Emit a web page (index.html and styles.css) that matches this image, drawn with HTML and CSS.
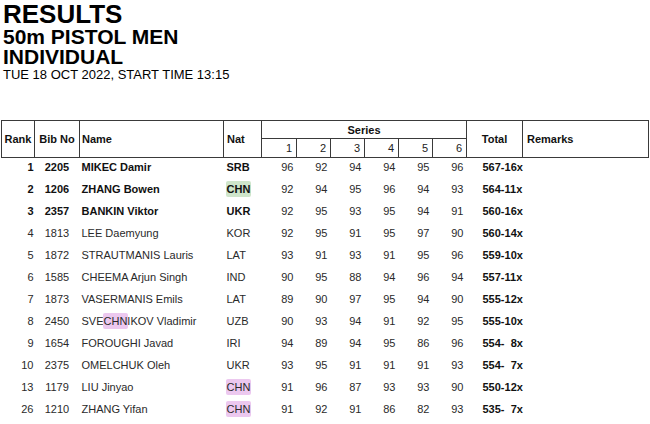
FILE: index.html
```html
<!DOCTYPE html>
<html>
<head>
<meta charset="utf-8">
<link rel="stylesheet" href="styles.css">
</head>
<body>
<header class="titles">
  <div class="t-main">RESULTS</div>
  <div class="t-event">50m PISTOL MEN</div>
  <div class="t-event">INDIVIDUAL</div>
  <div class="t-date">TUE 18 OCT 2022, START TIME 13:15</div>
</header>
<table class="results">
  <colgroup>
    <col class="c-rank"><col class="c-bib"><col class="c-name"><col class="c-nat">
    <col class="c-s1"><col class="c-s"><col class="c-s"><col class="c-s"><col class="c-s"><col class="c-s">
    <col class="c-total"><col class="c-rem">
  </colgroup>
  <thead>
    <tr class="h1">
      <th rowspan="2" class="th-c">Rank</th>
      <th rowspan="2" class="th-c">Bib No</th>
      <th rowspan="2" class="th-l">Name</th>
      <th rowspan="2" class="th-nat">Nat</th>
      <th colspan="6" class="th-c">Series</th>
      <th rowspan="2" class="th-c">Total</th>
      <th rowspan="2" class="th-rem">Remarks</th>
    </tr>
    <tr class="h2">
      <th class="th-n">1</th><th class="th-n">2</th><th class="th-n">3</th><th class="th-n">4</th><th class="th-n">5</th><th class="th-n">6</th>
    </tr>
  </thead>
  <tbody>
    <tr class="medal">
      <td class="rank">1</td><td class="bib">2205</td><td class="name">MIKEC Damir</td><td class="nat">SRB</td>
      <td class="s">96</td><td class="s">92</td><td class="s">94</td><td class="s">94</td><td class="s">95</td><td class="s">96</td>
      <td class="total">567-16x</td><td></td>
    </tr>
    <tr class="medal">
      <td class="rank">2</td><td class="bib">1206</td><td class="name">ZHANG Bowen</td><td class="nat"><span class="hl-green">CHN</span></td>
      <td class="s">92</td><td class="s">94</td><td class="s">95</td><td class="s">96</td><td class="s">94</td><td class="s">93</td>
      <td class="total">564-11x</td><td></td>
    </tr>
    <tr class="medal">
      <td class="rank">3</td><td class="bib">2357</td><td class="name">BANKIN Viktor</td><td class="nat">UKR</td>
      <td class="s">92</td><td class="s">95</td><td class="s">93</td><td class="s">95</td><td class="s">94</td><td class="s">91</td>
      <td class="total">560-16x</td><td></td>
    </tr>
    <tr>
      <td class="rank">4</td><td class="bib">1813</td><td class="name">LEE Daemyung</td><td class="nat">KOR</td>
      <td class="s">92</td><td class="s">95</td><td class="s">91</td><td class="s">95</td><td class="s">97</td><td class="s">90</td>
      <td class="total">560-14x</td><td></td>
    </tr>
    <tr>
      <td class="rank">5</td><td class="bib">1872</td><td class="name">STRAUTMANIS Lauris</td><td class="nat">LAT</td>
      <td class="s">93</td><td class="s">91</td><td class="s">93</td><td class="s">91</td><td class="s">95</td><td class="s">96</td>
      <td class="total">559-10x</td><td></td>
    </tr>
    <tr>
      <td class="rank">6</td><td class="bib">1585</td><td class="name">CHEEMA Arjun Singh</td><td class="nat">IND</td>
      <td class="s">90</td><td class="s">95</td><td class="s">88</td><td class="s">94</td><td class="s">96</td><td class="s">94</td>
      <td class="total">557-11x</td><td></td>
    </tr>
    <tr>
      <td class="rank">7</td><td class="bib">1873</td><td class="name">VASERMANIS Emils</td><td class="nat">LAT</td>
      <td class="s">89</td><td class="s">90</td><td class="s">97</td><td class="s">95</td><td class="s">94</td><td class="s">90</td>
      <td class="total">555-12x</td><td></td>
    </tr>
    <tr>
      <td class="rank">8</td><td class="bib">2450</td><td class="name">SVE<span class="hl-pink">CHN</span>IKOV Vladimir</td><td class="nat">UZB</td>
      <td class="s">90</td><td class="s">93</td><td class="s">94</td><td class="s">91</td><td class="s">92</td><td class="s">95</td>
      <td class="total">555-10x</td><td></td>
    </tr>
    <tr>
      <td class="rank">9</td><td class="bib">1654</td><td class="name">FOROUGHI Javad</td><td class="nat">IRI</td>
      <td class="s">94</td><td class="s">89</td><td class="s">94</td><td class="s">95</td><td class="s">86</td><td class="s">96</td>
      <td class="total">554-  8x</td><td></td>
    </tr>
    <tr>
      <td class="rank">10</td><td class="bib">2375</td><td class="name">OMELCHUK Oleh</td><td class="nat">UKR</td>
      <td class="s">93</td><td class="s">95</td><td class="s">91</td><td class="s">91</td><td class="s">91</td><td class="s">93</td>
      <td class="total">554-  7x</td><td></td>
    </tr>
    <tr>
      <td class="rank">13</td><td class="bib">1179</td><td class="name">LIU Jinyao</td><td class="nat"><span class="hl-pink">CHN</span></td>
      <td class="s">91</td><td class="s">96</td><td class="s">87</td><td class="s">93</td><td class="s">93</td><td class="s">90</td>
      <td class="total">550-12x</td><td></td>
    </tr>
    <tr>
      <td class="rank">26</td><td class="bib">1210</td><td class="name">ZHANG Yifan</td><td class="nat"><span class="hl-pink">CHN</span></td>
      <td class="s">91</td><td class="s">92</td><td class="s">91</td><td class="s">86</td><td class="s">82</td><td class="s">93</td>
      <td class="total">535-  7x</td><td></td>
    </tr>
  </tbody>
</table>
</body>
</html>
```

FILE: styles.css
```css
html, body {
  margin: 0;
  padding: 0;
  background: #ffffff;
}
body {
  font-family: "Liberation Sans", Arial, sans-serif;
  color: #1a1a1a;
  width: 650px;
  height: 424px;
  overflow: hidden;
}
.titles {
  padding: 1px 0 0 3px;
  color: #000;
}
.t-main {
  font-size: 26px;
  font-weight: bold;
  line-height: 26px;
}
.t-event {
  font-size: 21px;
  font-weight: bold;
  line-height: 20px;
}
.t-date {
  font-size: 13px;
  line-height: 15px;
}
.results {
  margin: 38px 0 0 1px;
  width: 648px;
  border-collapse: collapse;
  table-layout: fixed;
  font-size: 11px;
}
.c-rank { width: 33px; }
.c-bib { width: 45px; }
.c-name { width: 144px; }
.c-nat { width: 38px; }
.c-s1 { width: 35px; }
.c-s { width: 34px; }
.c-total { width: 56px; }
.c-rem { width: 126px; }

.results th {
  border: 1px solid #3a3a3a;
  padding: 0;
  font-weight: bold;
  color: #111;
  vertical-align: middle;
  white-space: nowrap;
}
.h1 th { height: 17px; line-height: 14px; }
.h2 th { height: 18px; line-height: 14px; }
.th-c { text-align: center; }
.results .th-l { text-align: left; padding-left: 2px; }
.results .th-nat { text-align: left; padding-left: 3px; }
.results .th-rem { text-align: left; padding-left: 4px; }
.results .th-n {
  font-weight: normal;
  text-align: right;
  padding-right: 4px;
  color: #222;
}

.results td {
  padding: 0 0 4px 0;
  line-height: 18px;
  height: 18px;
  white-space: pre;
  color: #2a2a2a;
  vertical-align: top;
}
.results .medal .rank,
.results .medal .bib,
.results .medal .name,
.results .medal .nat { font-weight: bold; color: #111; }
.results .rank { text-align: right; padding-right: 1px; }
.results .bib { text-align: center; }
.results .name { padding-left: 2px; }
.results .nat { padding-left: 3px; }
.results .s { text-align: right; padding-right: 3px; }
.results .total { padding-left: 16px; font-weight: bold; color: #111; }

.hl-green {
  background: #cfe5cb;
  border-radius: 2px;
  padding: 2px 1px;
  margin: 0 -1px;
}
.hl-pink {
  background: #ecc8ef;
  border-radius: 2px;
  padding: 2px 1px;
  margin: 0 -1px;
}
```
